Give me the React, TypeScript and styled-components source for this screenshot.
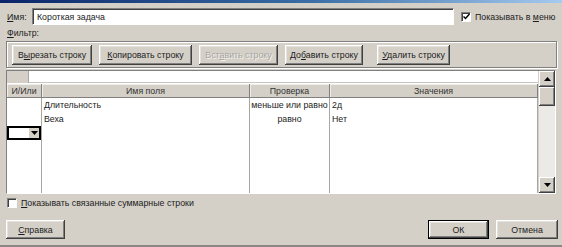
import { styled, createGlobalStyle } from "styled-components";
import type { FC, ReactNode } from "react";

const GlobalStyle = createGlobalStyle`
  html, body {
    margin: 0;
    padding: 0;
    background: #d4d0c8;
  }
  body {
    font-family: "Liberation Sans", Arial, sans-serif;
    font-size: 8.8px;
    color: #1c1c1c;
  }
  u {
    text-underline-offset: 1px;
  }
`;

// окно диалога
const Window = styled.div`
  width: 562px;
  height: 247px;
  box-sizing: border-box;
  background: #d4d0c8;
  display: flex;
  flex-direction: column;
  overflow: hidden;
  border-bottom: 2px solid #8a8882;
`;

const TitleStrip = styled.div`
  height: 3px;
  flex: none;
  background: linear-gradient(90deg, #0a246a 0%, #3a6ea5 55%, #a6caf0 100%);
`;

const NameRow = styled.div`
  display: flex;
  align-items: center;
  height: 17px;
  margin-top: 5px;
  padding-left: 7px;
`;

const Label = styled.span<{ $w?: number }>`
  width: ${(p) => (p.$w ? `${p.$w}px` : "auto")};
  flex: none;
  white-space: nowrap;
`;

const NameInput = styled.div`
  width: 422px;
  height: 17px;
  box-sizing: border-box;
  background: #fff;
  border: 1px solid;
  border-color: #808080 #fff #fff #808080;
  box-shadow: inset 1px 1px #404040;
  display: flex;
  align-items: center;
  padding-left: 4px;
`;

const CheckLine = styled.label<{ $ml?: number }>`
  display: flex;
  align-items: center;
  gap: 4px;
  margin-left: ${(p) => p.$ml ?? 0}px;
  white-space: nowrap;
`;

const Box = styled.span`
  width: 10px;
  height: 10px;
  box-sizing: border-box;
  background: #fff;
  border: 1px solid;
  border-color: #808080 #fff #fff #808080;
  box-shadow: inset 1px 1px #404040;
  display: flex;
  align-items: center;
  justify-content: center;
`;

const FilterLabel = styled.div`
  margin-top: 3px;
  height: 10px;
  line-height: 10px;
  padding-left: 7px;
`;

const GroupBox = styled.div`
  margin: 3px 0 0 6px;
  width: 551px;
  height: 27px;
  box-sizing: border-box;
  border: 1px solid #808080;
  box-shadow: inset 1px 1px #fff, 1px 1px #fff;
  display: flex;
  align-items: flex-start;
  padding: 3px 0 0 5px;
  gap: 7px;
`;

const Button = styled.button<{ $w: number; $h?: number; $ml?: number; $default?: boolean }>`
  width: ${(p) => p.$w}px;
  height: ${(p) => p.$h ?? 20}px;
  margin-left: ${(p) => p.$ml ?? 0}px;
  flex: none;
  padding: 0;
  font: inherit;
  color: #1c1c1c;
  background: #d4d0c8;
  border: ${(p) => (p.$default ? "1px solid #000" : "none")};
  box-shadow: inset -1px -1px #404040, inset 1px 1px #fff, inset -2px -2px #808080,
    inset 2px 2px #e4e2dc;
  white-space: nowrap;

  &:disabled {
    color: #a8a6a0;
    text-shadow: 1px 1px #f4f2ee;
  }
`;

const GridPanel = styled.div`
  margin: 2px 0 0 6px;
  width: 550px;
  height: 124px;
  box-sizing: border-box;
  border: 1px solid;
  border-color: #808080 #fff #fff #808080;
  display: grid;
  grid-template-columns: 1fr 17px;
  background: #fff;
`;

const TableArea = styled.div`
  display: flex;
  flex-direction: column;
  min-height: 0;
`;

const EditRow = styled.div`
  display: flex;
  height: 12px;
  flex: none;
  background: #d4d0c8;
`;

const EditCorner = styled.div`
  width: 21px;
  border-right: 1px solid #a8a6a0;
`;

const EditField = styled.div`
  flex: 1;
  background: #fff;
  border-bottom: 1px solid #c8c6c0;
`;

const columns = "35px 208px 80px 208px";

const HeaderRow = styled.div`
  display: grid;
  grid-template-columns: ${columns};
  height: 14px;
  flex: none;
  margin-top: 1px;
  box-sizing: border-box;
  background: #d4d0c8;
  border-bottom: 1px solid #808080;
`;

const HeaderCell = styled.div`
  display: flex;
  align-items: center;
  justify-content: center;
  border-right: 1px solid #808080;
  box-shadow: inset 1px 1px #f0eee8;
  color: #333;
`;

const Body = styled.div`
  flex: 1;
  display: grid;
  grid-template-columns: ${columns};
  min-height: 0;
`;

const Column = styled.div`
  display: flex;
  flex-direction: column;
  border-right: 1px solid #a8a6a0;
  overflow: hidden;
`;

const Cell = styled.div<{ $center?: boolean }>`
  height: 14px;
  flex: none;
  display: flex;
  align-items: center;
  justify-content: ${(p) => (p.$center ? "center" : "flex-start")};
  padding-left: ${(p) => (p.$center ? 0 : 2)}px;
  white-space: nowrap;
  overflow: hidden;
`;

const Combo = styled.div`
  height: 14px;
  flex: none;
  box-sizing: border-box;
  border: 2px solid #000;
  display: flex;
  justify-content: flex-end;
  align-items: stretch;
  background: #fff;
`;

const ComboArrow = styled.div`
  width: 10px;
  background: #d4d0c8;
  display: flex;
  align-items: center;
  justify-content: center;
`;

const ScrollBar = styled.div`
  display: flex;
  flex-direction: column;
  background: #ebe9e5;
  border-left: 1px solid #d4d0c8;
`;

const ScrollButton = styled.div<{ $h: number }>`
  height: ${(p) => p.$h}px;
  flex: none;
  background: #d4d0c8;
  box-shadow: inset -1px -1px #404040, inset 1px 1px #fff, inset -2px -2px #808080;
  display: flex;
  align-items: center;
  justify-content: center;
`;

const Track = styled.div`
  flex: 1;
  background-color: #eceae6;
`;

const CheckRow = styled.div`
  margin-top: 4px;
  padding-left: 7px;
  height: 10px;
  display: flex;
`;

const Footer = styled.div`
  margin-top: 12px;
  display: flex;
  align-items: center;
  padding: 0 4px 0 6px;
`;

const Spacer = styled.div`
  flex: 1;
`;

const Triangle: FC<{ up?: boolean }> = ({ up }) => (
  <svg width="7" height="4" viewBox="0 0 7 4">
    <path d={up ? "M0 4 L3.5 0 L7 4 Z" : "M0 0 L7 0 L3.5 4 Z"} fill="#000" />
  </svg>
);

const Check: FC = () => (
  <svg width="7" height="7" viewBox="0 0 7 7">
    <path d="M0.5 3.5 L2.5 5.5 L6.5 1" stroke="#000" strokeWidth="1.5" fill="none" />
  </svg>
);

const CheckBox: FC<{ checked?: boolean; ml?: number; children: ReactNode }> = ({
  checked,
  ml,
  children,
}) => (
  <CheckLine $ml={ml}>
    <Box>{checked && <Check />}</Box>
    <span>{children}</span>
  </CheckLine>
);

function App() {
  return (
    <>
      <GlobalStyle />
      <Window>
        <TitleStrip />
        <NameRow>
          <Label $w={25}>
            <u>И</u>мя:
          </Label>
          <NameInput>Короткая задача</NameInput>
          <CheckBox checked ml={7}>
            Показывать в <u>м</u>еню
          </CheckBox>
        </NameRow>
        <FilterLabel>
          <u>Ф</u>ильтр:
        </FilterLabel>
        <GroupBox>
          <Button $w={80}>
            В<u>ы</u>резать строку
          </Button>
          <Button $w={93}>
            <u>К</u>опировать строку
          </Button>
          <Button $w={79} disabled>
            Вст<u>а</u>вить строку
          </Button>
          <Button $w={78}>
            До<u>б</u>авить строку
          </Button>
          <Button $w={73} $ml={7}>
            <u>У</u>далить строку
          </Button>
        </GroupBox>
        <GridPanel>
          <TableArea>
            <EditRow>
              <EditCorner />
              <EditField />
            </EditRow>
            <HeaderRow>
              <HeaderCell>И/Или</HeaderCell>
              <HeaderCell>Имя поля</HeaderCell>
              <HeaderCell>Проверка</HeaderCell>
              <HeaderCell>Значения</HeaderCell>
            </HeaderRow>
            <Body>
              <Column>
                <Cell />
                <Cell />
                <Combo>
                  <ComboArrow>
                    <Triangle />
                  </ComboArrow>
                </Combo>
              </Column>
              <Column>
                <Cell>Длительность</Cell>
                <Cell>Веха</Cell>
              </Column>
              <Column>
                <Cell $center>меньше или равно</Cell>
                <Cell $center>равно</Cell>
              </Column>
              <Column>
                <Cell>2д</Cell>
                <Cell>Нет</Cell>
              </Column>
            </Body>
          </TableArea>
          <ScrollBar>
            <ScrollButton $h={16}>
              <Triangle up />
            </ScrollButton>
            <ScrollButton $h={19} />
            <Track />
            <ScrollButton $h={16}>
              <Triangle />
            </ScrollButton>
          </ScrollBar>
        </GridPanel>
        <CheckRow>
          <CheckBox>
            <u>П</u>оказывать связанные суммарные строки
          </CheckBox>
        </CheckRow>
        <Footer>
          <Button $w={59} $h={19}>
            <u>С</u>правка
          </Button>
          <Spacer />
          <Button $w={61} $h={19} $default>
            ОК
          </Button>
          <Button $w={62} $h={19} $ml={7}>
            Отмена
          </Button>
        </Footer>
      </Window>
    </>
  );
}

export default App;
